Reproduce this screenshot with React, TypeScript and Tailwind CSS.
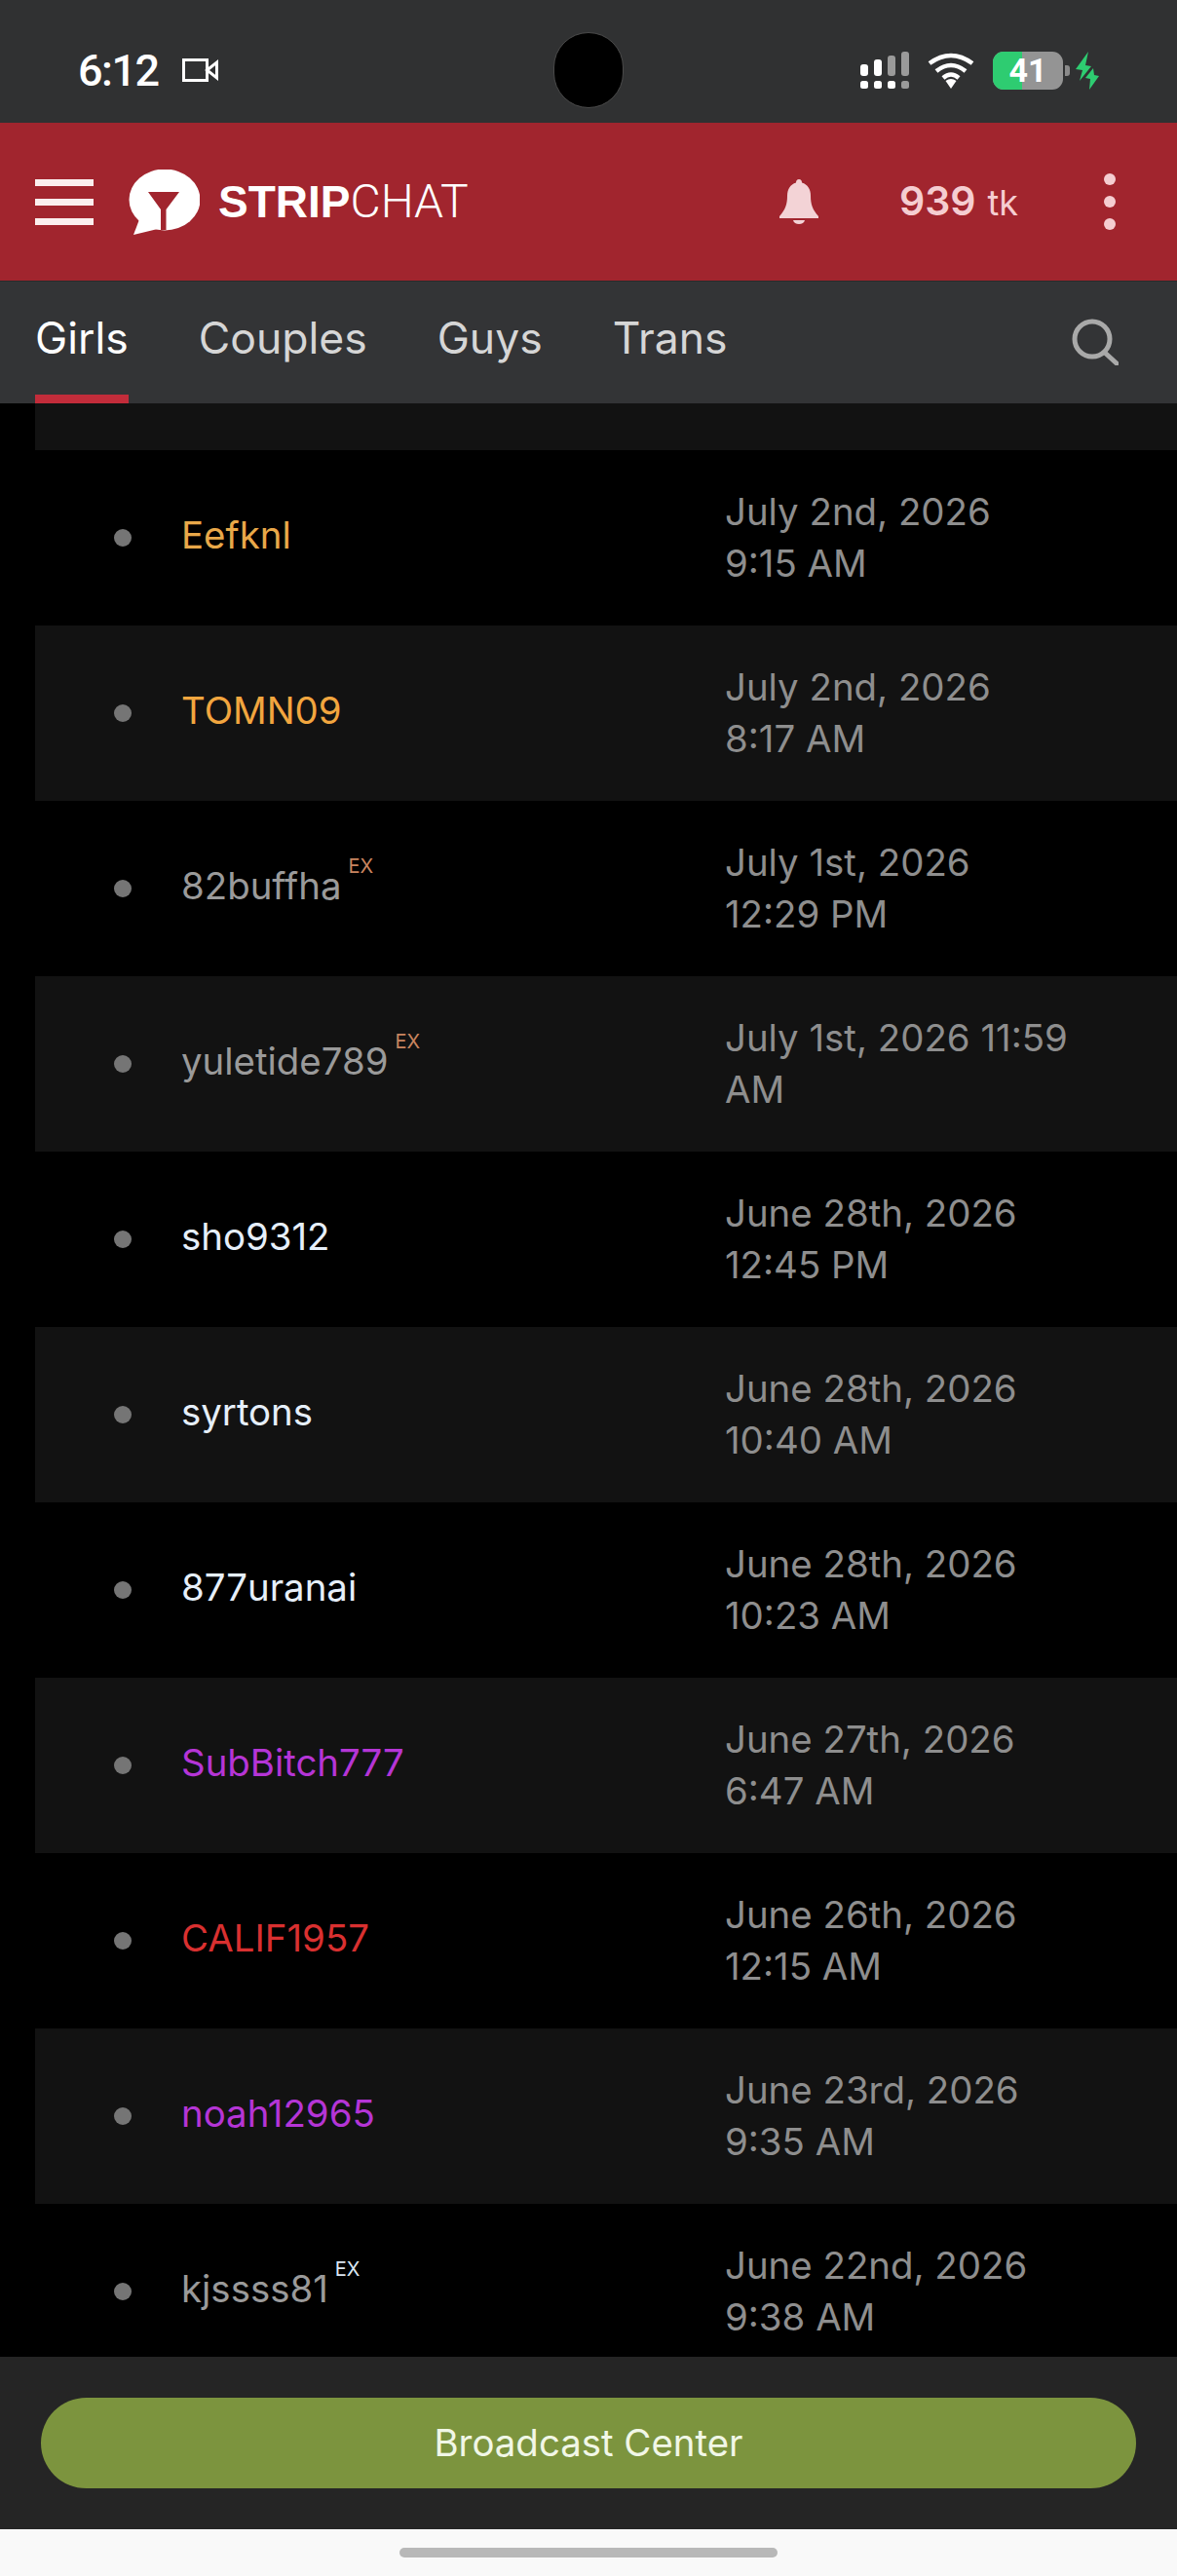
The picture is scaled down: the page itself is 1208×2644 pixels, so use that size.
const rows = [
  { name: 'Eefknl', color: 'text-[#e9a849]', date: 'July 2nd, 2026', time: '9:15 AM' },
  { name: 'TOMN09', color: 'text-[#f2a63f]', date: 'July 2nd, 2026', time: '8:17 AM' },
  { name: '82buffha', color: 'text-[#9a9a9a]', date: 'July 1st, 2026', time: '12:29 PM', ex: 'text-[#c9845f]' },
  { name: 'yuletide789', color: 'text-[#9a9a9a]', date: 'July 1st, 2026 11:59', time: 'AM', ex: 'text-[#c9845f]' },
  { name: 'sho9312', color: 'text-[#e6effa]', date: 'June 28th, 2026', time: '12:45 PM' },
  { name: 'syrtons', color: 'text-[#e6effa]', date: 'June 28th, 2026', time: '10:40 AM' },
  { name: '877uranai', color: 'text-[#e6effa]', date: 'June 28th, 2026', time: '10:23 AM' },
  { name: 'SubBitch777', color: 'text-[#b535d6]', date: 'June 27th, 2026', time: '6:47 AM' },
  { name: 'CALIF1957', color: 'text-[#d93030]', date: 'June 26th, 2026', time: '12:15 AM' },
  { name: 'noah12965', color: 'text-[#b535d6]', date: 'June 23rd, 2026', time: '9:35 AM' },
  { name: 'kjssss81', color: 'text-[#9a9a9a]', date: 'June 22nd, 2026', time: '9:38 AM', ex: 'text-[#dbe6f2]' },
];

function SignalIcon() {
  return (
    <svg width="50" height="38" viewBox="0 0 50 38">
      <rect x="0" y="13" width="8" height="12" rx="3" fill="#fff" />
      <rect x="14" y="8" width="8" height="17" rx="3" fill="#fff" />
      <rect x="28" y="4" width="8" height="21" rx="3" fill="#9a9a9a" />
      <rect x="42" y="0" width="8" height="25" rx="3" fill="#9a9a9a" />
      <rect x="0" y="30" width="8" height="8" rx="2.5" fill="#fff" />
      <rect x="14" y="30" width="8" height="8" rx="2.5" fill="#fff" />
      <rect x="28" y="30" width="8" height="8" rx="2.5" fill="#fff" />
      <rect x="42" y="30" width="8" height="8" rx="2.5" fill="#9a9a9a" />
    </svg>
  );
}

function WifiIcon() {
  return (
    <svg width="48" height="38" viewBox="0 0 48 38" fill="none" stroke="#fff" strokeWidth="4.5">
      <path d="M2 12 Q24 -4 46 12" />
      <path d="M9 20 Q24 8 39 20" />
      <path d="M16 27 Q24 20 32 27" />
      <path d="M18.5 30 Q24 26 29.5 30 L24 38 Z" fill="#fff" stroke="none" />
    </svg>
  );
}

function BoltIcon() {
  return (
    <svg width="24" height="39" viewBox="0 0 24 39" fill="#2ecc71">
      <path d="M13 0 L0 18 L7 19 L4 30 L16 15 L10 14 Z" />
      <path d="M18 17 L10 27 L15 28 L14 39 L24 25 L19 24 Z" />
    </svg>
  );
}

function Battery() {
  return (
    <div className="flex items-center">
      <div className="relative flex h-[39px] w-[72px] items-center justify-center overflow-hidden rounded-[11px] bg-[#949494]">
        <div className="absolute inset-y-0 left-0 w-[30px] bg-[#2ecc71]" />
        <span className="relative font-['Roboto',sans-serif] text-[34px] leading-none font-bold text-white">41</span>
      </div>
      <div className="ml-[2px] h-[11px] w-[5px] rounded-r-[3px] bg-[#8a8a8a]" />
    </div>
  );
}

function Logo() {
  return (
    <svg width="73" height="67" viewBox="0 0 73 67">
      <ellipse cx="37" cy="31" rx="36.5" ry="31.5" fill="#fff" />
      <path d="M13 46 L5 67 L34 60 Z" fill="#fff" />
      <path d="M20 23 H52 L38.5 41 V62 H33 V41 Z" fill="#a1252e" />
    </svg>
  );
}

function BellIcon() {
  return (
    <svg width="40" height="46" viewBox="0 0 40 46" fill="#f3d3d6">
      <path d="M20 0 C22 0 23 1.5 23 3.5 C29 5.5 32 10 32 17 C32 26 34 31 40 38 V40 H0 V38 C6 31 8 26 8 17 C8 10 11 5.5 17 3.5 C17 1.5 18 0 20 0 Z" />
      <path d="M14 42 H26 C25.5 44.5 23 46 20 46 C17 46 14.500 44.500 14 42 Z" />
    </svg>
  );
}

function SearchIcon() {
  return (
    <svg width="48" height="48" viewBox="0 0 48 48" fill="none" stroke="#a9a9a9" strokeWidth="5" strokeLinecap="round">
      <circle cx="21" cy="21" r="18" />
      <path d="M34 35 L46 46" />
    </svg>
  );
}

function CameraIcon() {
  return (
    <svg width="37" height="24" viewBox="0 0 37 24" fill="none" stroke="#fff" strokeWidth="3">
      <rect x="1.5" y="1.500" width="24" height="21" />
      <path d="M25.500 12 L35.500 4 V20 Z" />
    </svg>
  );
}

function Row({ row, striped }: { row: (typeof rows)[number]; striped: boolean }) {
  return (
    <div className={`ml-[36px] flex h-[180px] items-center ${striped ? 'bg-[#121212]' : 'bg-black'}`}>
      <div className="ml-[81px] h-[18px] w-[18px] rounded-full bg-[#757575]" />
      <div className="mb-[4px] ml-[51px] flex w-[558px] items-center">
        <span className={row.color}>{row.name}</span>
        {row.ex && <span className={`relative -top-[21px] ml-[7px] text-[20px] leading-none ${row.ex}`}>EX</span>}
      </div>
      <div className="leading-[53px] text-[#8e8e8e]">
        <div>{row.date}</div>
        <div>{row.time}</div>
      </div>
    </div>
  );
}

export default function App() {
  return (
    <div className="flex h-[2644px] w-[1208px] flex-col overflow-hidden bg-black font-['Inter',sans-serif] text-[38.4px]">
      <div className="relative flex h-[126px] shrink-0 items-center bg-[#303132] pt-[18px] pr-[80px] pl-[80px]">
        <span className="font-['Roboto',sans-serif] text-[45px] leading-none font-medium tracking-[-1.5px] text-white">6:12</span>
        <div className="ml-[24px]">
          <CameraIcon />
        </div>
        <div className="absolute top-[33px] left-[568px] h-[78px] w-[72px] rounded-full border border-[#4a4a4a] bg-black" />
        <div className="ml-auto flex items-center">
          <SignalIcon />
          <div className="ml-[19px]">
            <WifiIcon />
          </div>
          <div className="ml-[19px]">
            <Battery />
          </div>
          <div className="ml-[6px]">
            <BoltIcon />
          </div>
        </div>
      </div>

      <div className="flex h-[162px] shrink-0 items-center bg-[#a1252e] pr-[63px] pl-[36px]">
        <div className="flex w-[60px] flex-col gap-[13px]">
          <div className="h-[7px] bg-[#fbeeee]" />
          <div className="h-[7px] bg-[#fbeeee]" />
          <div className="h-[7px] bg-[#fbeeee]" />
        </div>
        <div className="ml-[36px]">
          <Logo />
        </div>
        <div className="ml-[19px] flex items-baseline font-['Liberation_Sans',sans-serif] text-[46px] leading-none text-white">
          <span className="font-bold">STRIP</span>
          <span className="font-['Roboto',sans-serif] text-[48px] font-light">CHAT</span>
        </div>
        <div className="mr-[2px] ml-auto">
          <BellIcon />
        </div>
        <div className="ml-[81px] flex items-baseline text-[#f5cdd1]">
          <span className="text-[41px] font-semibold">939</span>
          <span className="ml-[12px] text-[36px]">tk</span>
        </div>
        <div className="ml-[88px] flex flex-col gap-[11px]">
          <div className="h-[12px] w-[12px] rounded-full bg-[#f5cdd1]" />
          <div className="h-[12px] w-[12px] rounded-full bg-[#f5cdd1]" />
          <div className="h-[12px] w-[12px] rounded-full bg-[#f5cdd1]" />
        </div>
      </div>

      <div className="flex h-[126px] shrink-0 items-start gap-[72px] border-t border-[#2a2a2a] bg-[#333436] pr-[60px] pl-[36px] text-[44.5px] text-[#d6d6d6]">
        <div className="flex h-[125px] flex-col justify-between border-b-[9px] border-[#c22c3a] pt-[32px] leading-[52px] text-white">
          Girls
        </div>
        <div className="pt-[32px] leading-[52px]">Couples</div>
        <div className="pt-[32px] leading-[52px]">Guys</div>
        <div className="pt-[32px] leading-[52px]">Trans</div>
        <div className="ml-auto pt-[38px]">
          <SearchIcon />
        </div>
      </div>

      <div className="min-h-0 flex-1 overflow-hidden bg-black">
        <div className="ml-[36px] h-[48px] bg-[#121212]" />
        {rows.map((row, i) => (
          <Row key={row.name} row={row} striped={i % 2 === 1} />
        ))}
      </div>

      <div className="flex h-[177px] shrink-0 items-start bg-[#252525] px-[42px] pt-[42px]">
        <div className="flex h-[93px] w-full items-center justify-center rounded-full bg-[#7c943e] text-[#f1f7e6]">
          Broadcast Center
        </div>
      </div>

      <div className="flex h-[48px] shrink-0 items-start justify-center bg-[#f9f9f9] pt-[19px]">
        <div className="h-[10px] w-[388px] rounded-full bg-[#b8b8b8]" />
      </div>
    </div>
  );
}
